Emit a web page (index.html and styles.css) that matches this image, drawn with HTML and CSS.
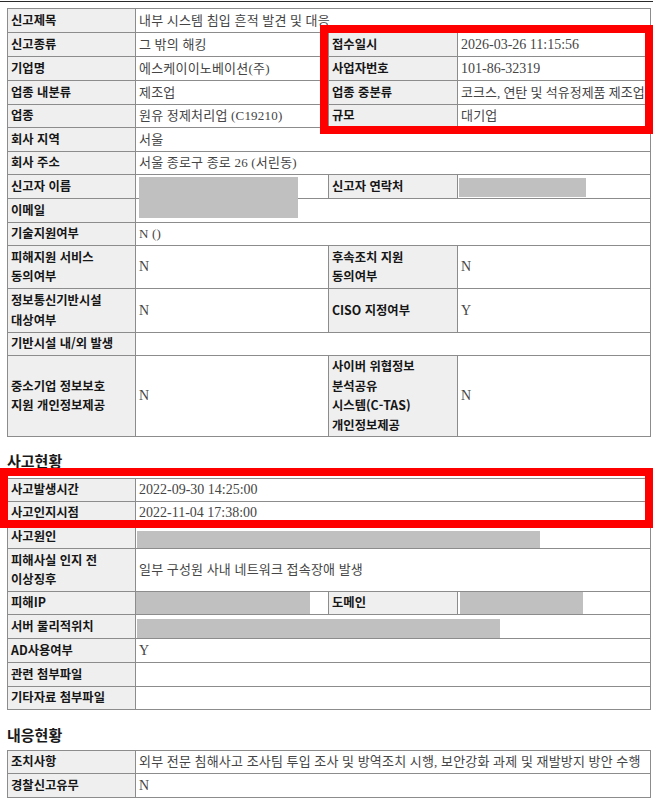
FILE: index.html
```html
<!DOCTYPE html>
<html lang="ko">
<head>
<meta charset="utf-8">
<title>신고 상세</title>
<link rel="stylesheet" href="styles.css">
</head>
<body>
<div class="page">
  <div class="topline"></div>

  <table class="grid t1">
    <colgroup><col class="c-l"><col class="c-v"><col class="c-l2"><col class="c-v2"></colgroup>
    <tr class="h24"><th>신고제목</th><td colspan="3">내부 시스템 침입 흔적 발견 및 대응</td></tr>
    <tr class="h24"><th>신고종류</th><td>그 밖의 해킹</td><th>접수일시</th><td><span class="num">2026-03-26 11:15:56</span></td></tr>
    <tr class="h24"><th>기업명</th><td>에스케이이노베이션(주)</td><th>사업자번호</th><td><span class="num">101-86-32319</span></td></tr>
    <tr class="h24"><th>업종 내분류</th><td>제조업</td><th>업종 중분류</th><td class="tight">코크스, 연탄 및 석유정제품 제조업</td></tr>
    <tr class="h23"><th>업종</th><td>원유 정제처리업 (C19210)</td><th>규모</th><td>대기업</td></tr>
    <tr class="h24"><th>회사 지역</th><td colspan="3">서울</td></tr>
    <tr class="h23"><th>회사 주소</th><td colspan="3">서울 종로구 종로 26 (서린동)</td></tr>
    <tr class="h24"><th>신고자 이름</th><td class="rel"><div class="redact r-name"></div></td><th>신고자 연락처</th><td class="pad0"><div class="redact r-phone"></div></td></tr>
    <tr class="h24"><th>이메일</th><td colspan="3"></td></tr>
    <tr class="h23"><th>기술지원여부</th><td colspan="3">N ()</td></tr>
    <tr class="h43"><th>피해지원 서비스<br>동의여부</th><td><span class="num">N</span></td><th>후속조치 지원<br>동의여부</th><td><span class="num">N</span></td></tr>
    <tr class="h44"><th>정보통신기반시설<br>대상여부</th><td><span class="num">N</span></td><th>CISO 지정여부</th><td><span class="num">Y</span></td></tr>
    <tr class="h23"><th>기반시설 내/외 발생</th><td colspan="3"></td></tr>
    <tr class="h81"><th>중소기업 정보보호<br>지원 개인정보제공</th><td><span class="num">N</span></td><th>사이버 위협정보<br>분석공유<br>시스템(C-TAS)<br>개인정보제공</th><td><span class="num">N</span></td></tr>
  </table>

  <h2 class="sec s1">사고현황</h2>

  <table class="grid">
    <colgroup><col class="c-l"><col class="c-v"><col class="c-l2"><col class="c-v2"></colgroup>
    <tr class="h23"><th>사고발생시간</th><td colspan="3"><span class="num">2022-09-30 14:25:00</span></td></tr>
    <tr class="h23"><th>사고인지시점</th><td colspan="3"><span class="num">2022-11-04 17:38:00</span></td></tr>
    <tr class="h24"><th>사고원인</th><td colspan="3" class="pad0 bottom"><div class="redact r-cause"></div></td></tr>
    <tr class="h43"><th>피해사실 인지 전<br>이상징후</th><td colspan="3">일부 구성원 사내 네트워크 접속장애 발생</td></tr>
    <tr class="h23"><th>피해IP</th><td class="pad0"><div class="redact r-ip"></div></td><th>도메인</th><td class="pad0"><div class="redact r-domain"></div></td></tr>
    <tr class="h24"><th>서버 물리적위치</th><td colspan="3" class="pad0 bottom"><div class="redact r-server"></div></td></tr>
    <tr class="h24"><th>AD사용여부</th><td colspan="3"><span class="num">Y</span></td></tr>
    <tr class="h24"><th>관련 첨부파일</th><td colspan="3"></td></tr>
    <tr class="h23"><th>기타자료 첨부파일</th><td colspan="3"></td></tr>
  </table>

  <h2 class="sec s2">내응현황</h2>

  <table class="grid">
    <colgroup><col class="c-l"><col class="c-v"><col class="c-l2"><col class="c-v2"></colgroup>
    <tr class="h23"><th>조치사항</th><td colspan="3">외부 전문 침해사고 조사팀 투입 조사 및 방역조치 시행, 보안강화 과제 및 재발방지 방안 수행</td></tr>
    <tr class="h24"><th>경찰신고유무</th><td colspan="3"><span class="num">N</span></td></tr>
  </table>

  <div class="mark m1"></div>
  <div class="mark m2"></div>
</div>
</body>
</html>
```

FILE: styles.css
```css
* { box-sizing: border-box; }
html, body { margin: 0; padding: 0; background: #fff; }
body { font-family: "Noto Sans CJK KR", "Noto Sans", sans-serif; color: #222; }

.page { position: relative; width: 658px; height: 805px; overflow: hidden; }
.topline { height: 1px; width: 653px; margin-top: 1px; background: #2a2a2a; }

.grid { border-collapse: collapse; table-layout: fixed; width: 643px; margin-left: 7px; }
.t1 { margin-top: 6px; }
.c-l { width: 128px; }
.c-v { width: 193px; }
.c-l2 { width: 129px; }
.c-v2 { width: 193px; }

.grid th, .grid td {
  border: 1px solid #8c8c8c;
  padding: 0 3px;
  vertical-align: middle;
  text-align: left;
  line-height: 19.5px;
  white-space: nowrap;
  overflow: hidden;
}
.grid th { background: #efefef; font-weight: 700; font-size: 12.3px; color: #161616; }
.grid td {
  font-family: "Liberation Serif", "Noto Sans CJK KR", serif;
  font-size: 13px;
  letter-spacing: 0.2px;
  color: #454545;
}
.grid td.tight { letter-spacing: 0; padding-right: 0; }
.grid td.pad0 { padding: 0; }
.grid td.bottom { vertical-align: bottom; }
.grid td.rel { position: relative; overflow: visible; padding: 0; }
.num { font-size: 14px; letter-spacing: 0; }

.h23 { height: 23px; }
.h24 { height: 24px; }
.h43 { height: 43px; }
.h44 { height: 44px; }
.h81 { height: 81px; }

.redact { background: #c0c0c0; }
.r-name { position: absolute; left: 3px; top: 2px; width: 159px; height: 41px; z-index: 1; }
.r-phone { width: 127px; height: 19px; margin: 2px 0 0 1px; }
.r-cause { width: 403px; height: 17px; margin-left: 1px; }
.r-ip { width: 174px; height: 22px; }
.r-domain { width: 123px; height: 22px; margin-left: 2px; }
.r-server { width: 363px; height: 19px; margin-left: 1px; }

.sec { margin: 0; font-size: 15px; font-weight: 700; line-height: 20px; color: #1a1a1a; padding-left: 7px; }
.s1 { margin-top: 14px; margin-bottom: 7px; }
.s2 { margin-top: 15px; margin-bottom: 5px; }

.mark { position: absolute; border: 8px solid #ff0000; }
.m1 { left: 320px; top: 25px; width: 333px; height: 109px; }
.m2 { left: 0; top: 468px; width: 653px; height: 60px; }
```
